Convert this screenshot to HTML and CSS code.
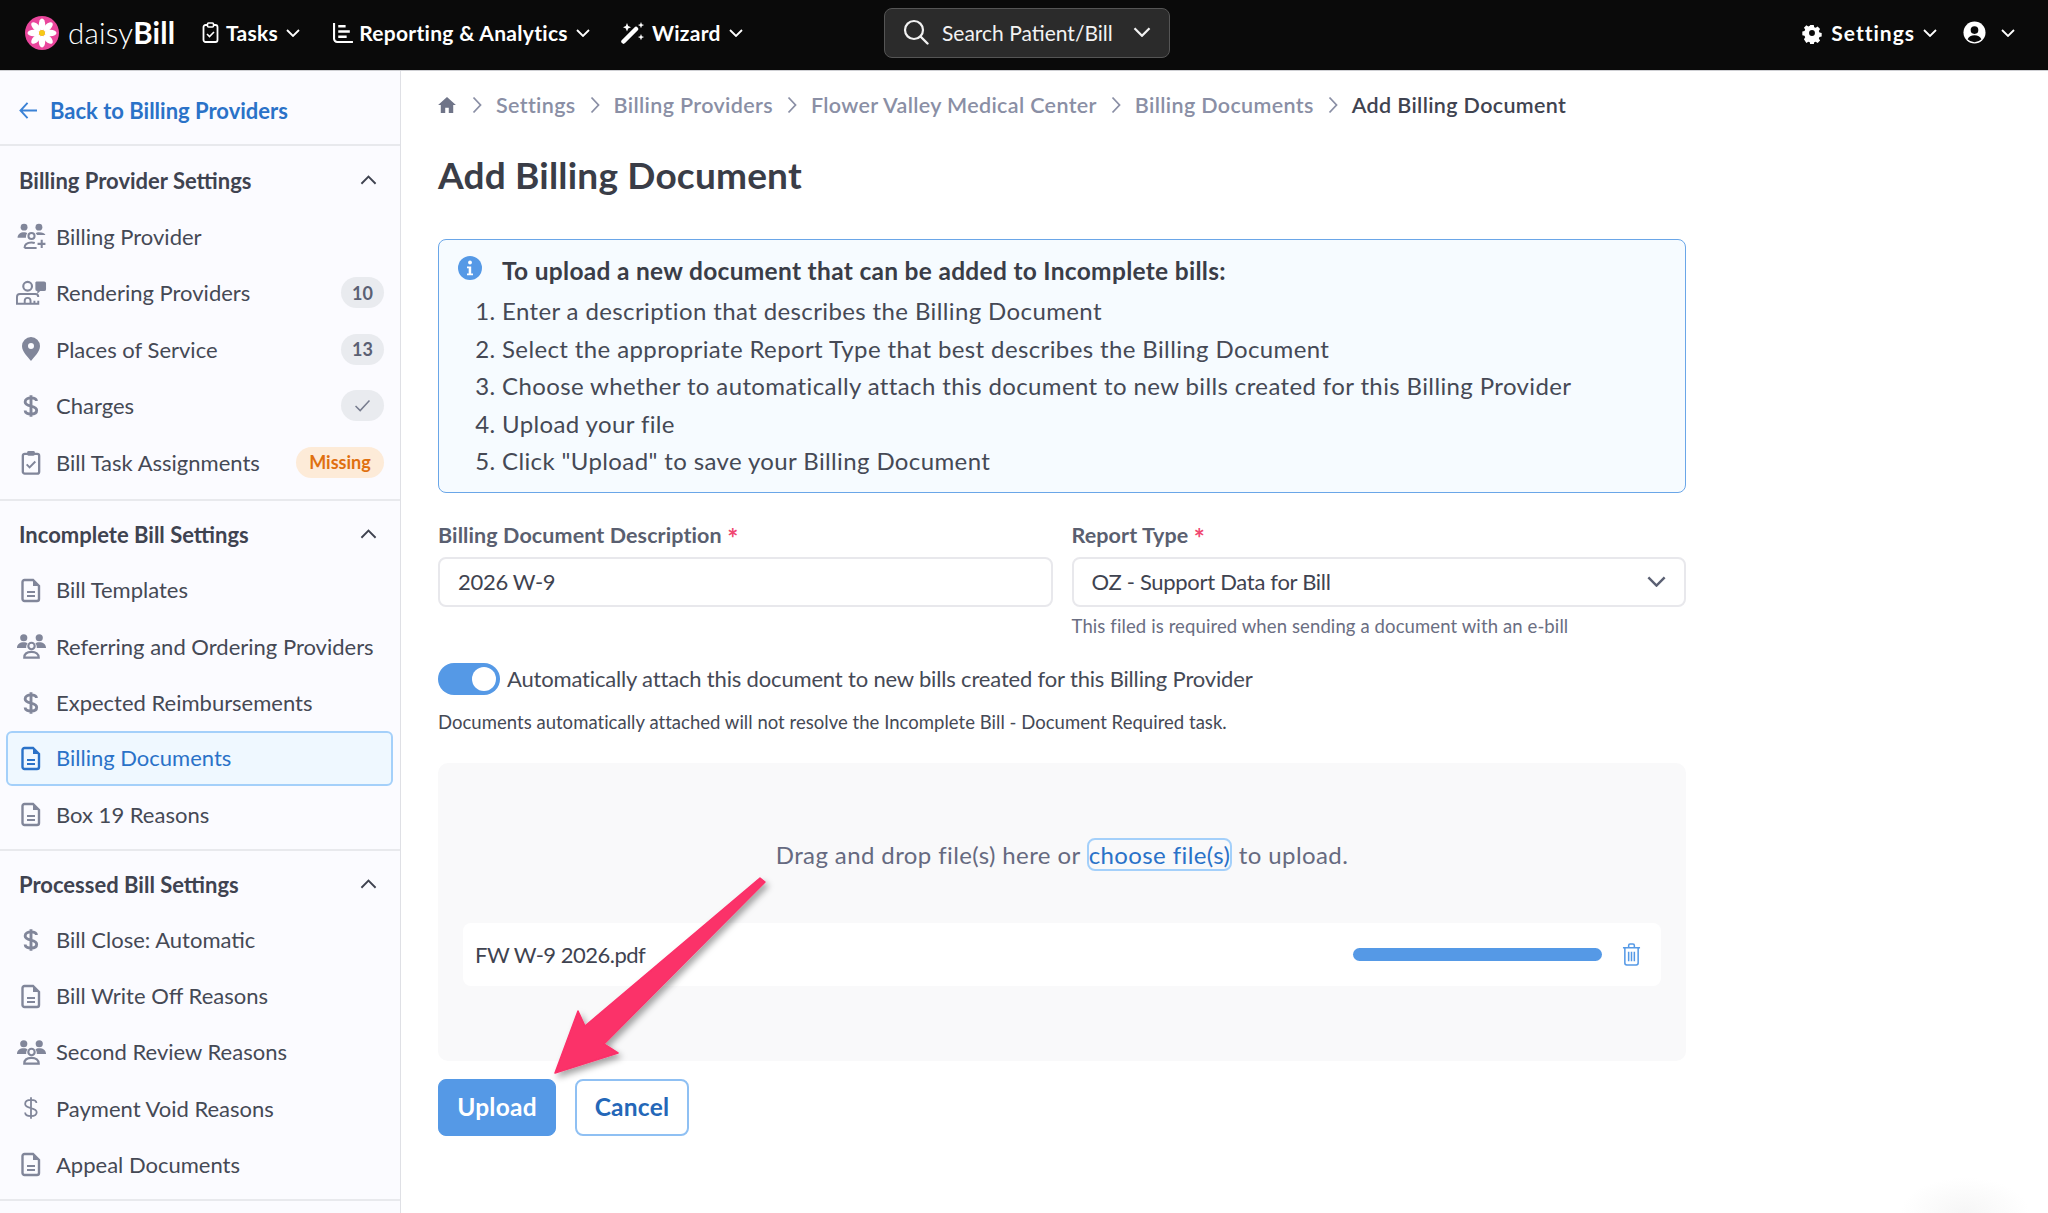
FILE: index.html
```html
<!DOCTYPE html>
<html lang="en">
<head>
<meta charset="utf-8">
<title>Add Billing Document</title>
<link rel="stylesheet" href="styles.css">
</head>
<body>
<svg class="defs" width="0" height="0">
  <defs>
    <symbol id="i-doc" viewBox="0 0 20 24"><path d="M3.500 1.500h8.500l6 6v13a2 2 0 0 1-2 2H3.500a2 2 0 0 1-2-2v-17a2 2 0 0 1 2-2z" fill="none" stroke="currentColor" stroke-width="2.400"/><path d="M12 1.500v6h6z" fill="currentColor"/><path d="M6 13.500h8M6 17.500h8" stroke="currentColor" stroke-width="2"/></symbol>
    <symbol id="i-dollar" viewBox="0 0 20 26"><path class="dollar-path" d="M16 7.500C16 5 13.500 4 10 4S3.500 5.500 3.500 8.500c0 6 12.800 3.200 12.800 9.200 0 3-2.800 4.300-6.300 4.300s-6.500-1.300-6.500-4M10 1v24" fill="none" stroke="currentColor"/></symbol>
    <symbol id="i-group" viewBox="0 0 32 26"><circle cx="8" cy="4.500" r="3.700" fill="currentColor"/><circle cx="24" cy="4.500" r="3.700" fill="currentColor"/><path d="M1 15c0-4 3-6 7-6 2 0 3 .5 4 1.500-1 1-1.500 2-1.500 4.500z M31 15c0-4-3-6-7-6-2 0-3 .5-4 1.500 1 1 1.500 2 1.500 4.500z" fill="currentColor"/><circle cx="16" cy="13" r="3.300" fill="none" stroke="currentColor" stroke-width="2.200"/><path d="M8.500 25c0-4 3-6 7.500-6s7.500 2 7.500 6z" fill="none" stroke="currentColor" stroke-width="2.200"/></symbol>
    <symbol id="i-chev-up" viewBox="0 0 18 10"><path d="M1.500 9 9 1.500 16.500 9" fill="none" stroke="currentColor" stroke-width="2"/></symbol>
    <symbol id="i-chev" viewBox="0 0 14 8"><path d="M1 1l6 6 6-6" fill="none" stroke="currentColor" stroke-width="1.800"/></symbol>
    <symbol id="i-crumb" viewBox="0 0 10 18"><path d="M1.500 1.500 8.500 9l-7 7.500" fill="none" stroke="currentColor" stroke-width="1.800"/></symbol>
  </defs>
</svg>

<header class="topbar">
  <div class="brand">
    <svg class="logo" viewBox="0 0 34 34">
      <circle cx="17" cy="17" r="17" fill="#e9459b"/>
      <g fill="#fff">
        <ellipse cx="17" cy="8.500" rx="3.200" ry="6"/>
        <ellipse cx="17" cy="25.500" rx="3.200" ry="6"/>
        <ellipse cx="8.500" cy="17" rx="6" ry="3.200"/>
        <ellipse cx="25.500" cy="17" rx="6" ry="3.200"/>
        <ellipse cx="11" cy="11" rx="3.200" ry="6" transform="rotate(-45 11 11)"/>
        <ellipse cx="23" cy="11" rx="3.200" ry="6" transform="rotate(45 23 11)"/>
        <ellipse cx="11" cy="23" rx="3.200" ry="6" transform="rotate(45 11 23)"/>
        <ellipse cx="23" cy="23" rx="3.200" ry="6" transform="rotate(-45 23 23)"/>
      </g>
      <circle cx="17" cy="17" r="3" fill="#f6c915"/>
    </svg>
    <span class="wordmark"><span class="wm-light">daisy</span><span class="wm-bold">Bill</span></span>
  </div>
  <nav class="topnav">
    <a class="topnav-item tasks">
      <svg class="ti ti-tasks" viewBox="0 0 16 21"><rect x="1" y="3" width="14" height="17" rx="2" fill="none" stroke="currentColor" stroke-width="1.800"/><rect x="5" y="1" width="6" height="4" rx="1" fill="#0a0a0a" stroke="currentColor" stroke-width="1.600"/><path d="M4.500 12l2.500 2.500 4.500-4.500" fill="none" stroke="currentColor" stroke-width="1.600"/></svg>
      <span>Tasks</span>
      <svg class="chev"><use href="#i-chev"/></svg>
    </a>
    <a class="topnav-item reporting">
      <svg class="ti ti-report" viewBox="0 0 20 20"><path d="M1 1v15a3 3 0 0 0 3 3h15" fill="none" stroke="currentColor" stroke-width="2"/><path d="M5 4h7M5 9h11M5 14h8" stroke="currentColor" stroke-width="2.400"/></svg>
      <span>Reporting &amp; Analytics</span>
      <svg class="chev"><use href="#i-chev"/></svg>
    </a>
    <a class="topnav-item wizard">
      <svg class="ti ti-wizard" viewBox="0 0 24 22"><path d="M2.500 19.500 15 7" stroke="currentColor" stroke-width="4.500" stroke-linecap="round"/><path d="M6 1l1.200 3L10 5.200 7.200 6.400 6 9.500 4.800 6.400 2 5.200 4.800 4z M20 0l.9 2.200 2.200.9-2.200.9-.9 2.200-.9-2.200-2.200-.9 2.200-.9z M20 12l.9 2.200 2.200.9-2.200.9-.9 2.200-.9-2.200-2.200-.9 2.200-.9z" fill="currentColor"/></svg>
      <span>Wizard</span>
      <svg class="chev"><use href="#i-chev"/></svg>
    </a>
  </nav>
  <div class="search">
    <svg class="search-icon" viewBox="0 0 26 26"><circle cx="11" cy="11" r="9" fill="none" stroke="currentColor" stroke-width="2.200"/><path d="M17.500 17.500 24.500 24.500" stroke="currentColor" stroke-width="2.400" stroke-linecap="round"/></svg>
    <span class="search-text">Search Patient/Bill</span>
    <svg class="search-chev"><use href="#i-chev"/></svg>
  </div>
  <div class="top-right">
    <a class="topnav-item settings">
      <svg class="ti ti-gear" viewBox="0 0 24 24"><path fill="currentColor" fill-rule="evenodd" d="M9.600 1h4.800l.6 3.100 2 .9 2.700-1.700 3.300 3.400-1.700 2.600.9 2.100 3 .6v4.800l-3 .6-.9 2.100 1.700 2.600-3.300 3.400-2.700-1.700-2 .9-.6 3.100H9.600l-.6-3.100-2-.9-2.700 1.700L1 20.400l1.700-2.600-.9-2.100-3-.6V10l3-.6.9-2.100L1 4.700l3.300-3.400L7 3l2-.9zM12 8a4 4 0 1 0 0 8 4 4 0 0 0 0-8z" transform="translate(2.400 2.400) scale(.8)"/></svg>
      <span>Settings</span>
      <svg class="chev"><use href="#i-chev"/></svg>
    </a>
    <a class="topnav-item user">
      <svg class="ti ti-user" viewBox="0 0 24 24"><circle cx="12" cy="12" r="11.500" fill="currentColor"/><circle cx="12" cy="9.500" r="4" fill="#0a0a0a"/><path d="M4.800 19c1.200-3 3.800-4.200 7.200-4.200s6 1.200 7.200 4.200a10 10 0 0 1-14.400 0z" fill="#0a0a0a"/></svg>
      <svg class="chev"><use href="#i-chev"/></svg>
    </a>
  </div>
</header>

<div class="shell">
  <aside class="sidebar">
    <a class="back">
      <svg class="back-arrow" viewBox="0 0 20 18"><path d="M9 1 1.500 9 9 17M1.500 9H19" fill="none" stroke="currentColor" stroke-width="2"/></svg>
      <span>Back to Billing Providers</span>
    </a>

    <section class="side-section s1">
      <div class="side-head"><span>Billing Provider Settings</span><svg class="chev-up"><use href="#i-chev-up"/></svg></div>
      <a class="side-item"><svg class="ic ic-group" viewBox="0 0 32 28"><circle cx="8" cy="4.500" r="3.700" fill="currentColor"/><circle cx="24" cy="4.500" r="3.700" fill="currentColor"/><path d="M1 16c0-4 3-6 7-6 1.500 0 2.500.5 3.500 1-1 1-1.500 2.500-1.500 5z M31 13c-1-2-3-3-7-3-1.500 0-2.500.5-3.500 1 .5.500 1 1 1.500 2z" fill="currentColor"/><circle cx="16" cy="14" r="3.300" fill="none" stroke="currentColor" stroke-width="2.200"/><path d="M8.500 27c0-4 3-6 7.500-6 1.500 0 2.500 .2 3.500.6M8.500 27h13M27 18v9M22.500 22.500H31" fill="none" stroke="currentColor" stroke-width="2.200"/></svg><span class="lbl">Billing Provider</span></a>
      <a class="side-item"><svg class="ic ic-group" viewBox="0 0 32 26"><circle cx="12" cy="6" r="4.500" fill="none" stroke="currentColor" stroke-width="2.200"/><path d="M21 1h8a2 2 0 0 1 2 2v6a2 2 0 0 1-2 2h-4l-3 3v-3a2 2 0 0 1-2-2V2z" fill="currentColor"/><path d="M4 14h16a3 3 0 0 1 3 3M4 14a3 3 0 0 0-3 3v7h8v-3a3 3 0 0 1 6 0v3h8v-3M19 21v3M9 24h6" fill="none" stroke="currentColor" stroke-width="2"/></svg><span class="lbl">Rendering Providers</span><span class="badge">10</span></a>
      <a class="side-item"><svg class="ic ic-pin" viewBox="0 0 20 26"><path fill="currentColor" fill-rule="evenodd" d="M10 1a9 9 0 0 1 9 9c0 6-6 11-9 15-3-4-9-9-9-15a9 9 0 0 1 9-9zm0 6a3 3 0 1 0 0 6 3 3 0 0 0 0-6z"/></svg><span class="lbl">Places of Service</span><span class="badge">13</span></a>
      <a class="side-item"><svg class="ic ic-dollar"><use href="#i-dollar"/></svg><span class="lbl">Charges</span><span class="badge badge-check"><svg class="check" viewBox="0 0 18 14"><path d="M1.500 7.500 6.500 12.500 16.500 1.500" fill="none" stroke="currentColor" stroke-width="1.600"/></svg></span></a>
      <a class="side-item"><svg class="ic ic-doc" viewBox="0 0 20 26"><rect x="1.500" y="4" width="17" height="20.500" rx="2" fill="none" stroke="currentColor" stroke-width="2.400"/><rect x="6" y="1" width="8" height="5" rx="1.500" fill="currentColor"/><path d="M5.500 15l3 3 6-6" fill="none" stroke="currentColor" stroke-width="2"/></svg><span class="lbl">Bill Task Assignments</span><span class="badge badge-warn">Missing</span></a>
    </section>

    <section class="side-section s2">
      <div class="side-head"><span>Incomplete Bill Settings</span><svg class="chev-up"><use href="#i-chev-up"/></svg></div>
      <a class="side-item"><svg class="ic ic-doc"><use href="#i-doc"/></svg><span class="lbl">Bill Templates</span></a>
      <a class="side-item"><svg class="ic ic-group"><use href="#i-group"/></svg><span class="lbl">Referring and Ordering Providers</span></a>
      <a class="side-item"><svg class="ic ic-dollar"><use href="#i-dollar"/></svg><span class="lbl">Expected Reimbursements</span></a>
      <a class="side-item active"><svg class="ic ic-doc"><use href="#i-doc"/></svg><span class="lbl">Billing Documents</span></a>
      <a class="side-item"><svg class="ic ic-doc"><use href="#i-doc"/></svg><span class="lbl">Box 19 Reasons</span></a>
    </section>

    <section class="side-section s3">
      <div class="side-head"><span>Processed Bill Settings</span><svg class="chev-up"><use href="#i-chev-up"/></svg></div>
      <a class="side-item"><svg class="ic ic-dollar"><use href="#i-dollar"/></svg><span class="lbl">Bill Close: Automatic</span></a>
      <a class="side-item"><svg class="ic ic-doc"><use href="#i-doc"/></svg><span class="lbl">Bill Write Off Reasons</span></a>
      <a class="side-item"><svg class="ic ic-group"><use href="#i-group"/></svg><span class="lbl">Second Review Reasons</span></a>
      <a class="side-item"><svg class="ic ic-dollar thin"><use href="#i-dollar"/></svg><span class="lbl">Payment Void Reasons</span></a>
      <a class="side-item"><svg class="ic ic-doc"><use href="#i-doc"/></svg><span class="lbl">Appeal Documents</span></a>
    </section>
  </aside>

  <main class="main">
    <nav class="crumbs">
      <svg class="home" viewBox="0 0 20 18"><path d="M10 0 20 9h-3v9h-5v-6H8v6H3V9H0z" fill="currentColor"/></svg>
      <svg class="crumb-sep"><use href="#i-crumb"/></svg><a>Settings</a>
      <svg class="crumb-sep"><use href="#i-crumb"/></svg><a>Billing Providers</a>
      <svg class="crumb-sep"><use href="#i-crumb"/></svg><a>Flower Valley Medical Center</a>
      <svg class="crumb-sep"><use href="#i-crumb"/></svg><a>Billing Documents</a>
      <svg class="crumb-sep"><use href="#i-crumb"/></svg><b>Add Billing Document</b>
    </nav>
    <h1 class="title">Add Billing Document</h1>

    <div class="content">
      <div class="info">
        <svg class="info-icon" viewBox="0 0 24 24"><circle cx="12" cy="12" r="12" fill="#5599e6"/><circle cx="12" cy="6.500" r="1.900" fill="#fff"/><path d="M9 10.500h4.200v7H15v1.800H9v-1.800h1.700v-5.200H9z" fill="#fff"/></svg>
        <div class="info-body">
          <p class="info-title">To upload a new document that can be added to Incomplete bills:</p>
          <ol class="info-list">
            <li>Enter a description that describes the Billing Document</li>
            <li>Select the appropriate Report Type that best describes the Billing Document</li>
            <li>Choose whether to automatically attach this document to new bills created for this Billing Provider</li>
            <li>Upload your file</li>
            <li>Click "Upload" to save your Billing Document</li>
          </ol>
        </div>
      </div>

      <div class="form-row">
        <div class="field">
          <label class="field-label">Billing Document Description <i>*</i></label>
          <div class="control">2026 W-9</div>
        </div>
        <div class="field">
          <label class="field-label">Report Type <i>*</i></label>
          <div class="control select"><span>OZ - Support Data for Bill</span><svg class="select-chev"><use href="#i-chev"/></svg></div>
          <p class="help">This filed is required when sending a document with an e-bill</p>
        </div>
      </div>

      <div class="toggle-row">
        <span class="toggle"><span class="knob"></span></span>
        <span>Automatically attach this document to new bills created for this Billing Provider</span>
      </div>
      <p class="note">Documents automatically attached will not resolve the Incomplete Bill - Document Required task.</p>

      <div class="drop">
        <p class="drop-text">Drag and drop file(s) here or <a class="choose">choose file(s)</a> to upload.</p>
        <div class="file">
          <span class="file-name">FW W-9 2026.pdf</span>
          <span class="progress"></span>
          <svg class="trash" viewBox="0 0 20 24"><path d="M1 5h18M7 5V2.500A1.500 1.500 0 0 1 8.500 1h3A1.500 1.500 0 0 1 13 2.500V5M3 5v16a2 2 0 0 0 2 2h10a2 2 0 0 0 2-2V5M7 9v10M10 9v10M13 9v10" fill="none" stroke="currentColor" stroke-width="1.600"/></svg>
        </div>
      </div>

      <div class="actions">
        <button class="btn primary">Upload</button>
        <button class="btn outline">Cancel</button>
      </div>
    </div>
  </main>
</div>

<div class="corner-glow"></div>
<svg class="arrow" viewBox="0 0 2048 1213">
  <defs><filter id="ashadow" x="-20%" y="-20%" width="140%" height="140%"><feDropShadow dx="3" dy="4" stdDeviation="3" flood-color="#000" flood-opacity=".35"/></filter></defs>
  <path d="M555 1073 578 1011 585 1026 760 878 765 882 604 1044 618 1053z" fill="#fb3069" stroke="#fb3069" stroke-width="1.500" stroke-linejoin="round" filter="url(#ashadow)"/>
</svg>
</body>
</html>
```

FILE: styles.css
```css
* { box-sizing: border-box; }
html, body { margin: 0; height: 100%; }
body {
  font-family: "Lato", "Liberation Sans", sans-serif;
  color: #3f4350;
  background: #fff;
  height: 1213px;
  overflow: hidden;
  position: relative;
}
.defs { position: absolute; }
p { margin: 0; }

/* top bar */
.topbar {
  height: 71px;
  background: #0a0a0a;
  border-bottom: 1px solid #cfd0d4;
  display: flex;
  align-items: center;
  color: #fff;
  position: relative;
  padding: 0 0 5px 25px;
}
.brand { display: flex; align-items: center; width: 176px; }
.logo { width: 34px; height: 34px; margin-right: 9px; flex: none; }
.wordmark { font-size: 29.500px; line-height: 34px; letter-spacing: .2px; }
.wm-light { font-weight: 300; }
.wm-bold { font-weight: 700; }
.topnav { display: flex; align-items: center; margin-left: 1px; }
.topnav-item { display: flex; align-items: center; font-size: 21px; font-weight: 700; letter-spacing: .3px; color: #fff; }
.ti { display: block; }
.ti-tasks { width: 17px; height: 21px; margin-right: 7px; }
.ti-report { width: 21px; height: 21px; margin-right: 5px; }
.ti-wizard { width: 24px; height: 24px; margin-right: 7px; }
.ti-gear { width: 22px; height: 22px; margin-right: 8px; }
.ti-user { width: 23px; height: 23px; margin-right: 7px; }
.chev { width: 14px; height: 8px; margin-left: 8px; }
.tasks { margin-right: 33px; }
.reporting { margin-right: 31px; }
.search {
  position: absolute;
  left: 884px;
  top: 8px;
  width: 286px;
  height: 50px;
  border-radius: 8px;
  background: #2b2b2b;
  border: 1px solid #555;
  display: flex;
  align-items: center;
  padding: 0 0 2px 18px;
  font-size: 21px;
  color: #f2f2f2;
}
.search-icon { width: 26px; height: 26px; margin-right: 13px; }
.search-chev { width: 18px; height: 10px; margin-left: 20px; }
.top-right { margin-left: auto; display: flex; align-items: center; padding-right: 33px; }
.settings { margin-right: 26px; letter-spacing: 1px; }

/* shell */
.shell { display: flex; height: 1142px; }
.sidebar {
  width: 401px;
  flex: none;
  background: #fbfbff;
  border-right: 1px solid #dfe0e5;
  overflow: hidden;
}
.back {
  height: 75px;
  padding: 6px 0 0 19px;
  display: flex;
  align-items: center;
  color: #2a72c8;
  font-size: 22px;
  font-weight: 700;
  border-bottom: 2px solid #e8e9ed;
}
.back-arrow { width: 19px; height: 17px; margin-right: 12px; color: #3b82d6; }
.side-section { border-bottom: 2px solid #e8e9ed; }
.s1 { height: 355px; padding-top: 13px; }
.s2 { height: 350px; padding-top: 12px; }
.s3 { height: 350px; padding-top: 12px; }
.side-head {
  height: 42px;
  margin-bottom: 7px;
  padding: 0 23px 0 19px;
  display: flex;
  align-items: center;
  justify-content: space-between;
  font-size: 22px;
  font-weight: 700;
  color: #3f4350;
}
.chev-up { width: 17px; height: 10px; color: #3f4350; }
.side-item {
  height: 56.500px;
  display: flex;
  align-items: center;
  position: relative;
  padding: 0 16px 0 56px;
  font-size: 22px;
  color: #454955;
}
.s3 .side-item { height: 56.200px; }
.s2 .side-head { margin-bottom: 6.500px; }
.s3 .side-head { margin-bottom: 6.500px; }
.lbl { white-space: nowrap; }
.ic { position: absolute; color: #81869a; }
.ic-group { left: 16px; top: 15px; width: 31px; height: 26px; }
.ic-doc { left: 21px; top: 16px; width: 20px; height: 25px; }
.ic-dollar { left: 22px; top: 15px; width: 18px; height: 26px; }
.ic-pin { left: 21px; top: 15px; width: 20px; height: 26px; }
.dollar-path { stroke-width: var(--dollar-stroke, 3.200px); }
.thin { --dollar-stroke: 2px; }
.badge {
  margin-left: auto;
  min-width: 43px;
  height: 31px;
  border-radius: 16px;
  background: #e9ebef;
  color: #5b6073;
  font-size: 18px;
  font-weight: 700;
  display: flex;
  align-items: center;
  justify-content: center;
}
.check { width: 17px; height: 13px; color: #777c8e; }
.badge-warn { background: #fdebd8; color: #e07010; width: 88px; }
.badge-check { width: 43px; }
.side-item.active {
  margin: 0 7px 0 6px;
  height: 55px;
  padding: 0 16px 2px 48px;
  border: 2px solid #a4d0fa;
  border-radius: 6px;
  background: #eff8ff;
  color: #2a72c8;
}
.side-item.active .ic { left: 13px; top: 13px; color: #2a72c8; }

/* main */
.main { flex: 1; padding-left: 37px; min-width: 0; }
.crumbs {
  height: 68px;
  display: flex;
  align-items: center;
  font-size: 21.500px;
  font-weight: 600;
  color: #8a8fa5;
  letter-spacing: .35px;
}
.crumbs b { color: #3f4350; font-weight: 600; }
.home { width: 18px; height: 16px; color: #6f7488; margin-right: 2px; }
.crumb-sep { width: 10px; height: 18px; margin: 0 14px; color: #8a8fa5; }
.title {
  margin: 0;
  height: 70px;
  display: flex;
  align-items: center;
  font-size: 37px;
  font-weight: 700;
  color: #3a3d47;
  letter-spacing: .2px;
}
.content { width: 1248px; padding-top: 30px; }
.info {
  height: 254px;
  background: #f6fbff;
  border: 1px solid #6aa6e8;
  border-radius: 8px;
  display: flex;
  padding: 15px 0 0 19px;
}
.info-icon { width: 24px; height: 24px; flex: none; margin: 1px 20px 0 0; }
.info-title { font-size: 24.500px; font-weight: 700; line-height: 31px; color: #3a3d47; letter-spacing: .3px; }
.info-list { margin: 6px 0 0; padding: 0; list-style-position: outside; font-size: 24px; line-height: 37.500px; color: #454955; letter-spacing: .38px; }
.info-list li { white-space: nowrap; }
.form-row { display: flex; gap: 19px; margin-top: 26px; height: 143.500px; }
.field { flex: 1; min-width: 0; }
.field-label { display: block; font-size: 21.500px; font-weight: 700; line-height: 32px; color: #5a5f70; letter-spacing: .1px; }
.field-label i { color: #f04770; font-style: normal; font-size: 26px; line-height: 0; vertical-align: -5px; }
.control {
  margin-top: 6px;
  height: 50px;
  border: 2px solid #e8e8ec;
  border-radius: 8px;
  display: flex;
  align-items: center;
  padding: 0 18px 2px;
  font-size: 22px;
  color: #3f4350;
  letter-spacing: -.3px;
}
.select { justify-content: space-between; }
.select-chev { width: 19px; height: 11px; color: #5b6073; }
.help { margin-top: 7px; font-size: 18.500px; line-height: 24px; color: #6a6e82; letter-spacing: .11px; }
.toggle-row { display: flex; align-items: center; height: 32px; font-size: 22px; color: #454955; letter-spacing: -.17px; }
.toggle { width: 62px; height: 32px; border-radius: 16px; background: #5599e6; margin-right: 7px; position: relative; flex: none; }
.knob { position: absolute; right: 4px; top: 4px; width: 24px; height: 24px; border-radius: 50%; background: #fff; }
.note { margin-top: 15px; height: 24px; font-size: 18.500px; line-height: 24px; color: #454955; letter-spacing: .03px; }
.drop {
  margin-top: 29.500px;
  height: 298px;
  background: #f9f9fa;
  border-radius: 10px;
  padding-top: 74px;
}
.drop-text { text-align: center; font-size: 24px; line-height: 36px; color: #666a80; letter-spacing: .4px; }
.choose { color: #2a72c8; border: 2px solid #a4d0fa; border-radius: 8px; padding: 0; }
.file {
  margin: 50px 25px 0 25px;
  height: 63px;
  background: #fff;
  border-radius: 8px;
  display: flex;
  align-items: center;
  padding: 0 20px 0 12px;
  font-size: 22px;
  color: #3f4350;
  letter-spacing: -.5px;
}
.progress { margin-left: auto; width: 249px; height: 13px; border-radius: 7px; background: #5599e6; }
.trash { width: 19px; height: 23px; margin-left: 20px; color: #5599e6; }
.actions { display: flex; gap: 19px; margin-top: 18px; }
.btn { height: 57px; border-radius: 8px; font-family: inherit; font-size: 24.500px; font-weight: 700; letter-spacing: .25px; padding: 0 0 2px; }
.primary { width: 118px; background: #5599e6; border: 1px solid #5599e6; color: #fff; }
.outline { width: 114px; background: #fff; border: 2px solid #8fc0f3; color: #2467b8; }

.corner-glow {
  position: absolute;
  left: 1900px;
  bottom: 0;
  width: 130px;
  height: 36px;
  background: radial-gradient(ellipse at 50% 100%, #f6f6f6, #fff 70%);
}
.arrow { position: absolute; left: 0; top: 0; width: 2048px; height: 1213px; pointer-events: none; }
```
